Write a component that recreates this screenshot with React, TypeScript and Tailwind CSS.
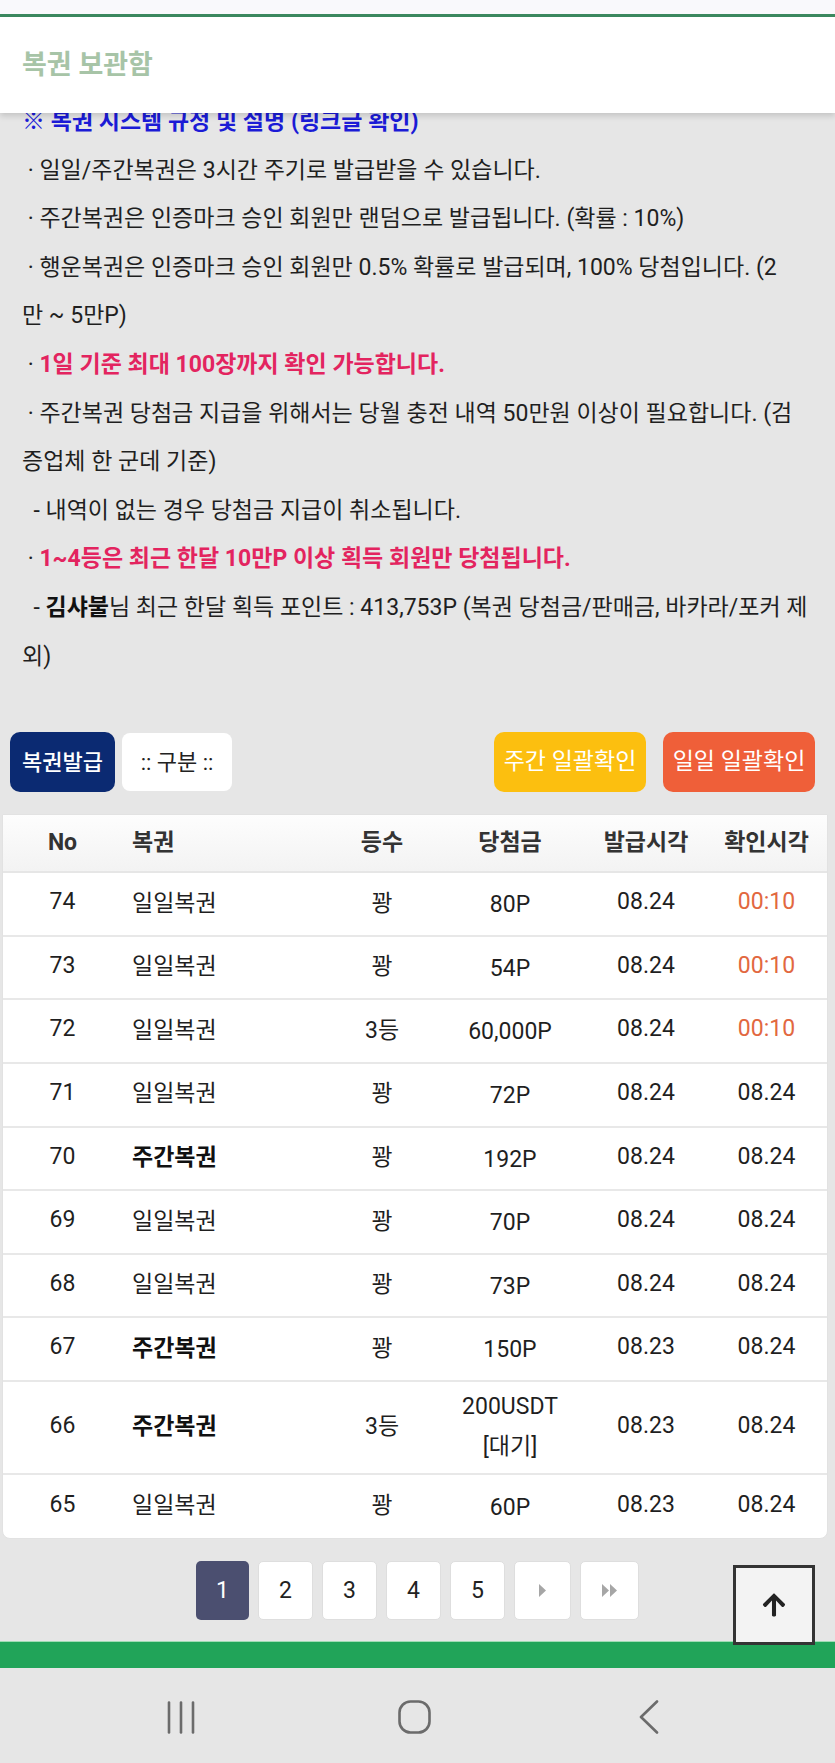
import React from "react";
import { FaArrowUp } from "react-icons/fa";

type Row = {
  no: string;
  name: string;
  weekly?: boolean;
  rank: string;
  prize: string[];
  issued: string;
  checked: string;
  orange?: boolean;
};

const rows: Row[] = [
  { no: "74", name: "일일복권", rank: "꽝", prize: ["80P"], issued: "08.24", checked: "00:10", orange: true },
  { no: "73", name: "일일복권", rank: "꽝", prize: ["54P"], issued: "08.24", checked: "00:10", orange: true },
  { no: "72", name: "일일복권", rank: "3등", prize: ["60,000P"], issued: "08.24", checked: "00:10", orange: true },
  { no: "71", name: "일일복권", rank: "꽝", prize: ["72P"], issued: "08.24", checked: "08.24" },
  { no: "70", name: "주간복권", weekly: true, rank: "꽝", prize: ["192P"], issued: "08.24", checked: "08.24" },
  { no: "69", name: "일일복권", rank: "꽝", prize: ["70P"], issued: "08.24", checked: "08.24" },
  { no: "68", name: "일일복권", rank: "꽝", prize: ["73P"], issued: "08.24", checked: "08.24" },
  { no: "67", name: "주간복권", weekly: true, rank: "꽝", prize: ["150P"], issued: "08.23", checked: "08.24" },
  { no: "66", name: "주간복권", weekly: true, rank: "3등", prize: ["200USDT", "[대기]"], issued: "08.23", checked: "08.24" },
  { no: "65", name: "일일복권", rank: "꽝", prize: ["60P"], issued: "08.23", checked: "08.24" },
];

const grid = "grid grid-cols-[119px_200px_120px_136px_136px_1fr] items-center";

function PageBtn({ children, active, w }: { children: React.ReactNode; active?: boolean; w: string }) {
  return (
    <div
      className={`${w} h-[59px] rounded-[5px] flex items-center justify-center text-[23px] ${
        active ? "bg-[#4b4f70] text-white" : "bg-white text-[#222] border border-[#dedede]"
      }`}
    >
      {children}
    </div>
  );
}

export default function App() {
  return (
    <div className="relative w-[835px] h-[1763px] overflow-hidden bg-[#e6e6e6] font-['Roboto','Noto_Sans_CJK_KR',sans-serif] text-[#1f1f1f]">
      {/* top strip */}
      <div className="h-[14px] bg-[#f9f9fc]" />
      <div className="h-[3px] bg-[#3c8a60]" />

      {/* sticky header overlay */}
      <div className="absolute left-0 right-0 top-[17px] h-[96px] bg-white z-10 flex items-center pl-[22px] shadow-[0_3px_6px_rgba(0,0,0,0.15)]">
        <span className="text-[27px] font-bold text-[#a7c4a7]">복권 보관함</span>
      </div>

      {/* notice text */}
      <div className="pt-[81px] px-[22px] text-[23px] leading-[48.6px] whitespace-nowrap">
        <div className="font-bold text-[#1b1bd6]">※ 복권 시스템 규정 및 설명 (링크글 확인)</div>
        <div>&nbsp;· 일일/주간복권은 3시간 주기로 발급받을 수 있습니다.</div>
        <div>&nbsp;· 주간복권은 인증마크 승인 회원만 랜덤으로 발급됩니다. (확률 : 10%)</div>
        <div>
          &nbsp;· 행운복권은 인증마크 승인 회원만 0.5% 확률로 발급되며, 100% 당첨입니다. (2
          <br />
          만 ~ 5만P)
        </div>
        <div className="text-[#e3245f] font-bold">
          <span className="font-normal text-[#1f1f1f]">&nbsp;· </span>1일 기준 최대 100장까지 확인 가능합니다.
        </div>
        <div>
          &nbsp;· 주간복권 당첨금 지급을 위해서는 당월 충전 내역 50만원 이상이 필요합니다. (검
          <br />
          증업체 한 군데 기준)
        </div>
        <div>&nbsp;&nbsp;- 내역이 없는 경우 당첨금 지급이 취소됩니다.</div>
        <div className="text-[#e3245f] font-bold">
          <span className="font-normal text-[#1f1f1f]">&nbsp;· </span>1~4등은 최근 한달 10만P 이상 획득 회원만 당첨됩니다.
        </div>
        <div>
          &nbsp;&nbsp;- <b className="font-bold text-[#111]">김샤불</b>님 최근 한달 획득 포인트 : 413,753P (복권 당첨금/판매금, 바카라/포커 제
          <br />
          외)
        </div>
      </div>

      {/* buttons */}
      <div className="mt-[51px] pl-[10px] pr-[20px] flex items-center justify-between">
        <div className="flex items-center gap-[7px]">
          <div className="w-[105px] h-[60px] rounded-[10px] bg-[#0b2a72] text-white text-[22px] font-medium flex items-center justify-center">
            복권발급
          </div>
          <div className="w-[110px] h-[58px] rounded-[8px] bg-white text-[#222] text-[22px] flex items-center justify-center">
            :: 구분 ::
          </div>
        </div>
        <div className="flex items-center gap-[17px]">
          <div className="w-[152px] h-[60px] rounded-[10px] bg-[#fcbf0f] text-white text-[23px] flex items-center justify-center">
            주간 일괄확인
          </div>
          <div className="w-[152px] h-[60px] rounded-[10px] bg-[#ef5f39] text-white text-[23px] flex items-center justify-center">
            일일 일괄확인
          </div>
        </div>
      </div>

      {/* table */}
      <div className="mt-[22px] ml-[2px] mr-[7px] bg-white border border-[#e2e2e2] rounded-b-[8px] text-[23px]">
        <div className={`${grid} h-[58px] border-b-2 border-[#e6e6e6] bg-gradient-to-b from-[#fdfdfd] to-[#f3f3f3] font-bold text-[#333]`}>
          <div className="text-center">No</div>
          <div className="pl-[10px]">복권</div>
          <div className="text-center">등수</div>
          <div className="text-center">당첨금</div>
          <div className="text-center">발급시각</div>
          <div className="text-center pr-[8px]">확인시각</div>
        </div>
        {rows.map((r, i) => {
          const last = i === rows.length - 1;
          const tall = r.prize.length > 1;
          return (
            <div
              key={r.no}
              className={`${grid} ${tall ? "h-[93px]" : "h-[63.6px]"} ${last ? "" : "border-b-2 border-[#e8e8e8]"}`}
            >
              <div className="text-center pb-[3px]">{r.no}</div>
              <div className={`pl-[10px] ${r.weekly ? "font-bold text-[#111]" : ""}`}>{r.name}</div>
              <div className="text-center">{r.rank}</div>
              <div className={`text-center ${tall ? "leading-[40px]" : "pt-[3px]"}`}>
                {r.prize.map((p) => (
                  <div key={p}>{p}</div>
                ))}
              </div>
              <div className="text-center pb-[3px]">{r.issued}</div>
              <div className={`text-center pr-[8px] pb-[3px] ${r.orange ? "text-[#e2683f]" : ""}`}>{r.checked}</div>
            </div>
          );
        })}
      </div>

      {/* pagination */}
      <div className="mt-[22px] flex justify-center gap-[9px]">
        <PageBtn active w="w-[53px]">1</PageBtn>
        <PageBtn w="w-[55px]">2</PageBtn>
        <PageBtn w="w-[55px]">3</PageBtn>
        <PageBtn w="w-[55px]">4</PageBtn>
        <PageBtn w="w-[55px]">5</PageBtn>
        <PageBtn w="w-[57px]">
          <svg width="8" height="13" viewBox="0 0 8 13">
            <polygon points="0,0 7,6.5 0,13" fill="#a6a6a6" />
          </svg>
        </PageBtn>
        <PageBtn w="w-[59px]">
          <svg width="16" height="13" viewBox="0 0 16 13">
            <polygon points="0,0 7,6.5 0,13" fill="#a6a6a6" />
            <polygon points="8,0 15,6.5 8,13" fill="#a6a6a6" />
          </svg>
        </PageBtn>
      </div>

      {/* green footer bar */}
      <div className="mt-[21px] h-[27px] bg-[#21a459] border-t border-[#9fdcb4]" />

      {/* android nav bar */}
      <div className="h-[98px] flex items-center pl-[167px]">
        <svg width="28" height="33" viewBox="0 0 28 33">
          <line x1="2" y1="1.5" x2="2" y2="31.5" stroke="#6b6b6b" strokeWidth="2.6" strokeLinecap="round" />
          <line x1="14" y1="1.5" x2="14" y2="31.5" stroke="#6b6b6b" strokeWidth="2.6" strokeLinecap="round" />
          <line x1="26" y1="1.5" x2="26" y2="31.5" stroke="#6b6b6b" strokeWidth="2.6" strokeLinecap="round" />
        </svg>
        <svg className="ml-[203px]" width="33" height="34" viewBox="0 0 33 34">
          <rect x="1.5" y="1.5" width="30" height="31" rx="11" fill="none" stroke="#6b6b6b" strokeWidth="2.6" />
        </svg>
        <svg className="ml-[207px]" width="22" height="34" viewBox="0 0 22 34">
          <polyline points="19,1.5 3,17 19,32.5" fill="none" stroke="#6b6b6b" strokeWidth="2.6" strokeLinecap="round" strokeLinejoin="round" />
        </svg>
      </div>

      {/* scroll to top */}
      <div className="absolute left-[733px] top-[1565px] w-[82px] h-[80px] border-[3px] border-[#333] bg-[#f3f3f3] flex items-center justify-center z-20">
        <FaArrowUp className="text-[#222]" size={26} />
      </div>
    </div>
  );
}
